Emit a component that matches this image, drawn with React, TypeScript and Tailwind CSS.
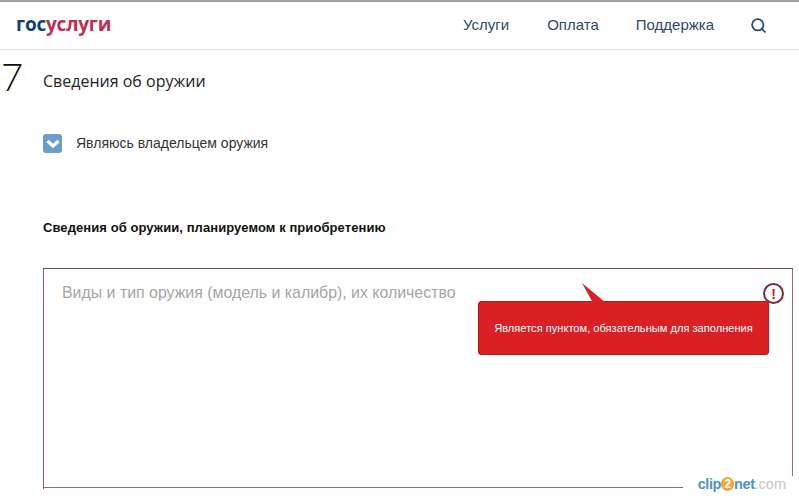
import React from "react";
import { Search } from "lucide-react";

const sans = "font-['Liberation_Sans',Arial,sans-serif]";

function Header() {
  return (
    <header className="flex h-[50px] items-center justify-between border-t-2 border-b border-t-[#a3a3a3] border-b-[#e3e5e6] bg-white pl-4 pr-[32px]">
      <div className="font-['Open_Sans',sans-serif] text-[19px] leading-none font-bold tracking-[-0.2px] pb-[3px]">
        <span className="text-[#153e70]">гос</span>
        <span className="text-[#c12d52]">услуги</span>
      </div>
      <nav className="flex items-center text-[15px] text-[#2f4a60]">
        <a className="mr-[38px]">Услуги</a>
        <a className="mr-[37px]">Оплата</a>
        <a className="mr-[36px]">Поддержка</a>
        <Search size={17} strokeWidth={2.5} className="text-[#1d4f78]" />
      </nav>
    </header>
  );
}

function ErrorTip() {
  return (
    <div className="absolute right-[24px] top-[32px] flex h-[54px] w-[291px] items-center justify-center rounded-[3px] border border-[#b8191d] bg-[#d92024] text-[11.1px] text-white">
      <svg className="absolute left-[103px] top-[-19px]" width="25" height="20" viewBox="0 0 25 20">
        <path d="M0 0 L24 20 L11 20 Z" fill="#d92024" />
      </svg>
      Является пунктом, обязательным для заполнения
    </div>
  );
}

export default function App() {
  return (
    <div className={`relative h-[496px] w-[799px] overflow-hidden bg-white ${sans}`}>
      <Header />
      <span className="absolute left-[1px] top-[55px] font-['Lato',sans-serif] text-[38px] leading-[42px] font-light text-[#111]">7</span>
      <main className="pl-[43px] pr-[6px]">
        <h2 className="pt-[21px] font-['Open_Sans',sans-serif] text-[16px] leading-[20px] text-[#222]">Сведения об оружии</h2>
        <label className="mt-[42px] flex items-center gap-[14px]">
          <span className="flex h-[19px] w-[19px] items-center justify-center rounded-[3px] bg-[#6a9fcb]">
            <svg width="14" height="12" viewBox="0 0 14 12">
              <path d="M1.5 4 L7 9 L12.5 4" fill="none" stroke="#fff" strokeWidth="3.2" />
            </svg>
          </span>
          <span className="text-[14px] leading-[20px] text-[#333]">Являюсь владельцем оружия</span>
        </label>
        <h3 className="mt-[67px] text-[13px] leading-[16px] font-bold tracking-[0.08px] text-[#111]">
          Сведения об оружии, планируемом к приобретению
        </h3>
        <div className="relative mt-[32px] h-[221px] border-t border-l border-t-[#7d3a48] border-l-[#9a5a66]">
          <p className="pl-[18px] pt-[15px] text-[15.9px] leading-[18px] text-[#a5a5a5]">
            Виды и тип оружия (модель и калибр), их количество
          </p>
          <div className="absolute right-[9px] top-[14px] flex h-[21px] w-[21px] items-center justify-center rounded-full border-2 border-[#7d2a3c] bg-white text-[14px] leading-none font-bold text-[#c0202c]">
            !
          </div>
          <ErrorTip />
          <div className="absolute right-0 top-0 h-[207px] w-px bg-[#9a6a74]" />
          <div className="absolute bottom-[1px] left-0 h-px w-[639px] bg-[#a0606c]" />
        </div>
      </main>
      <div className="absolute bottom-[5px] right-[13px] flex items-center text-[14.5px] leading-none font-bold tracking-[-0.4px]">
        <span className="text-[#4f95bf]">clip</span>
        <span className="flex h-[14px] w-[13px] items-center justify-center rounded-full bg-[#eda63a] text-[12px] text-white">2</span>
        <span className="text-[#4f95bf]">net</span>
        <span className="font-normal tracking-normal text-[#c4c8ca]">.com</span>
      </div>
    </div>
  );
}
